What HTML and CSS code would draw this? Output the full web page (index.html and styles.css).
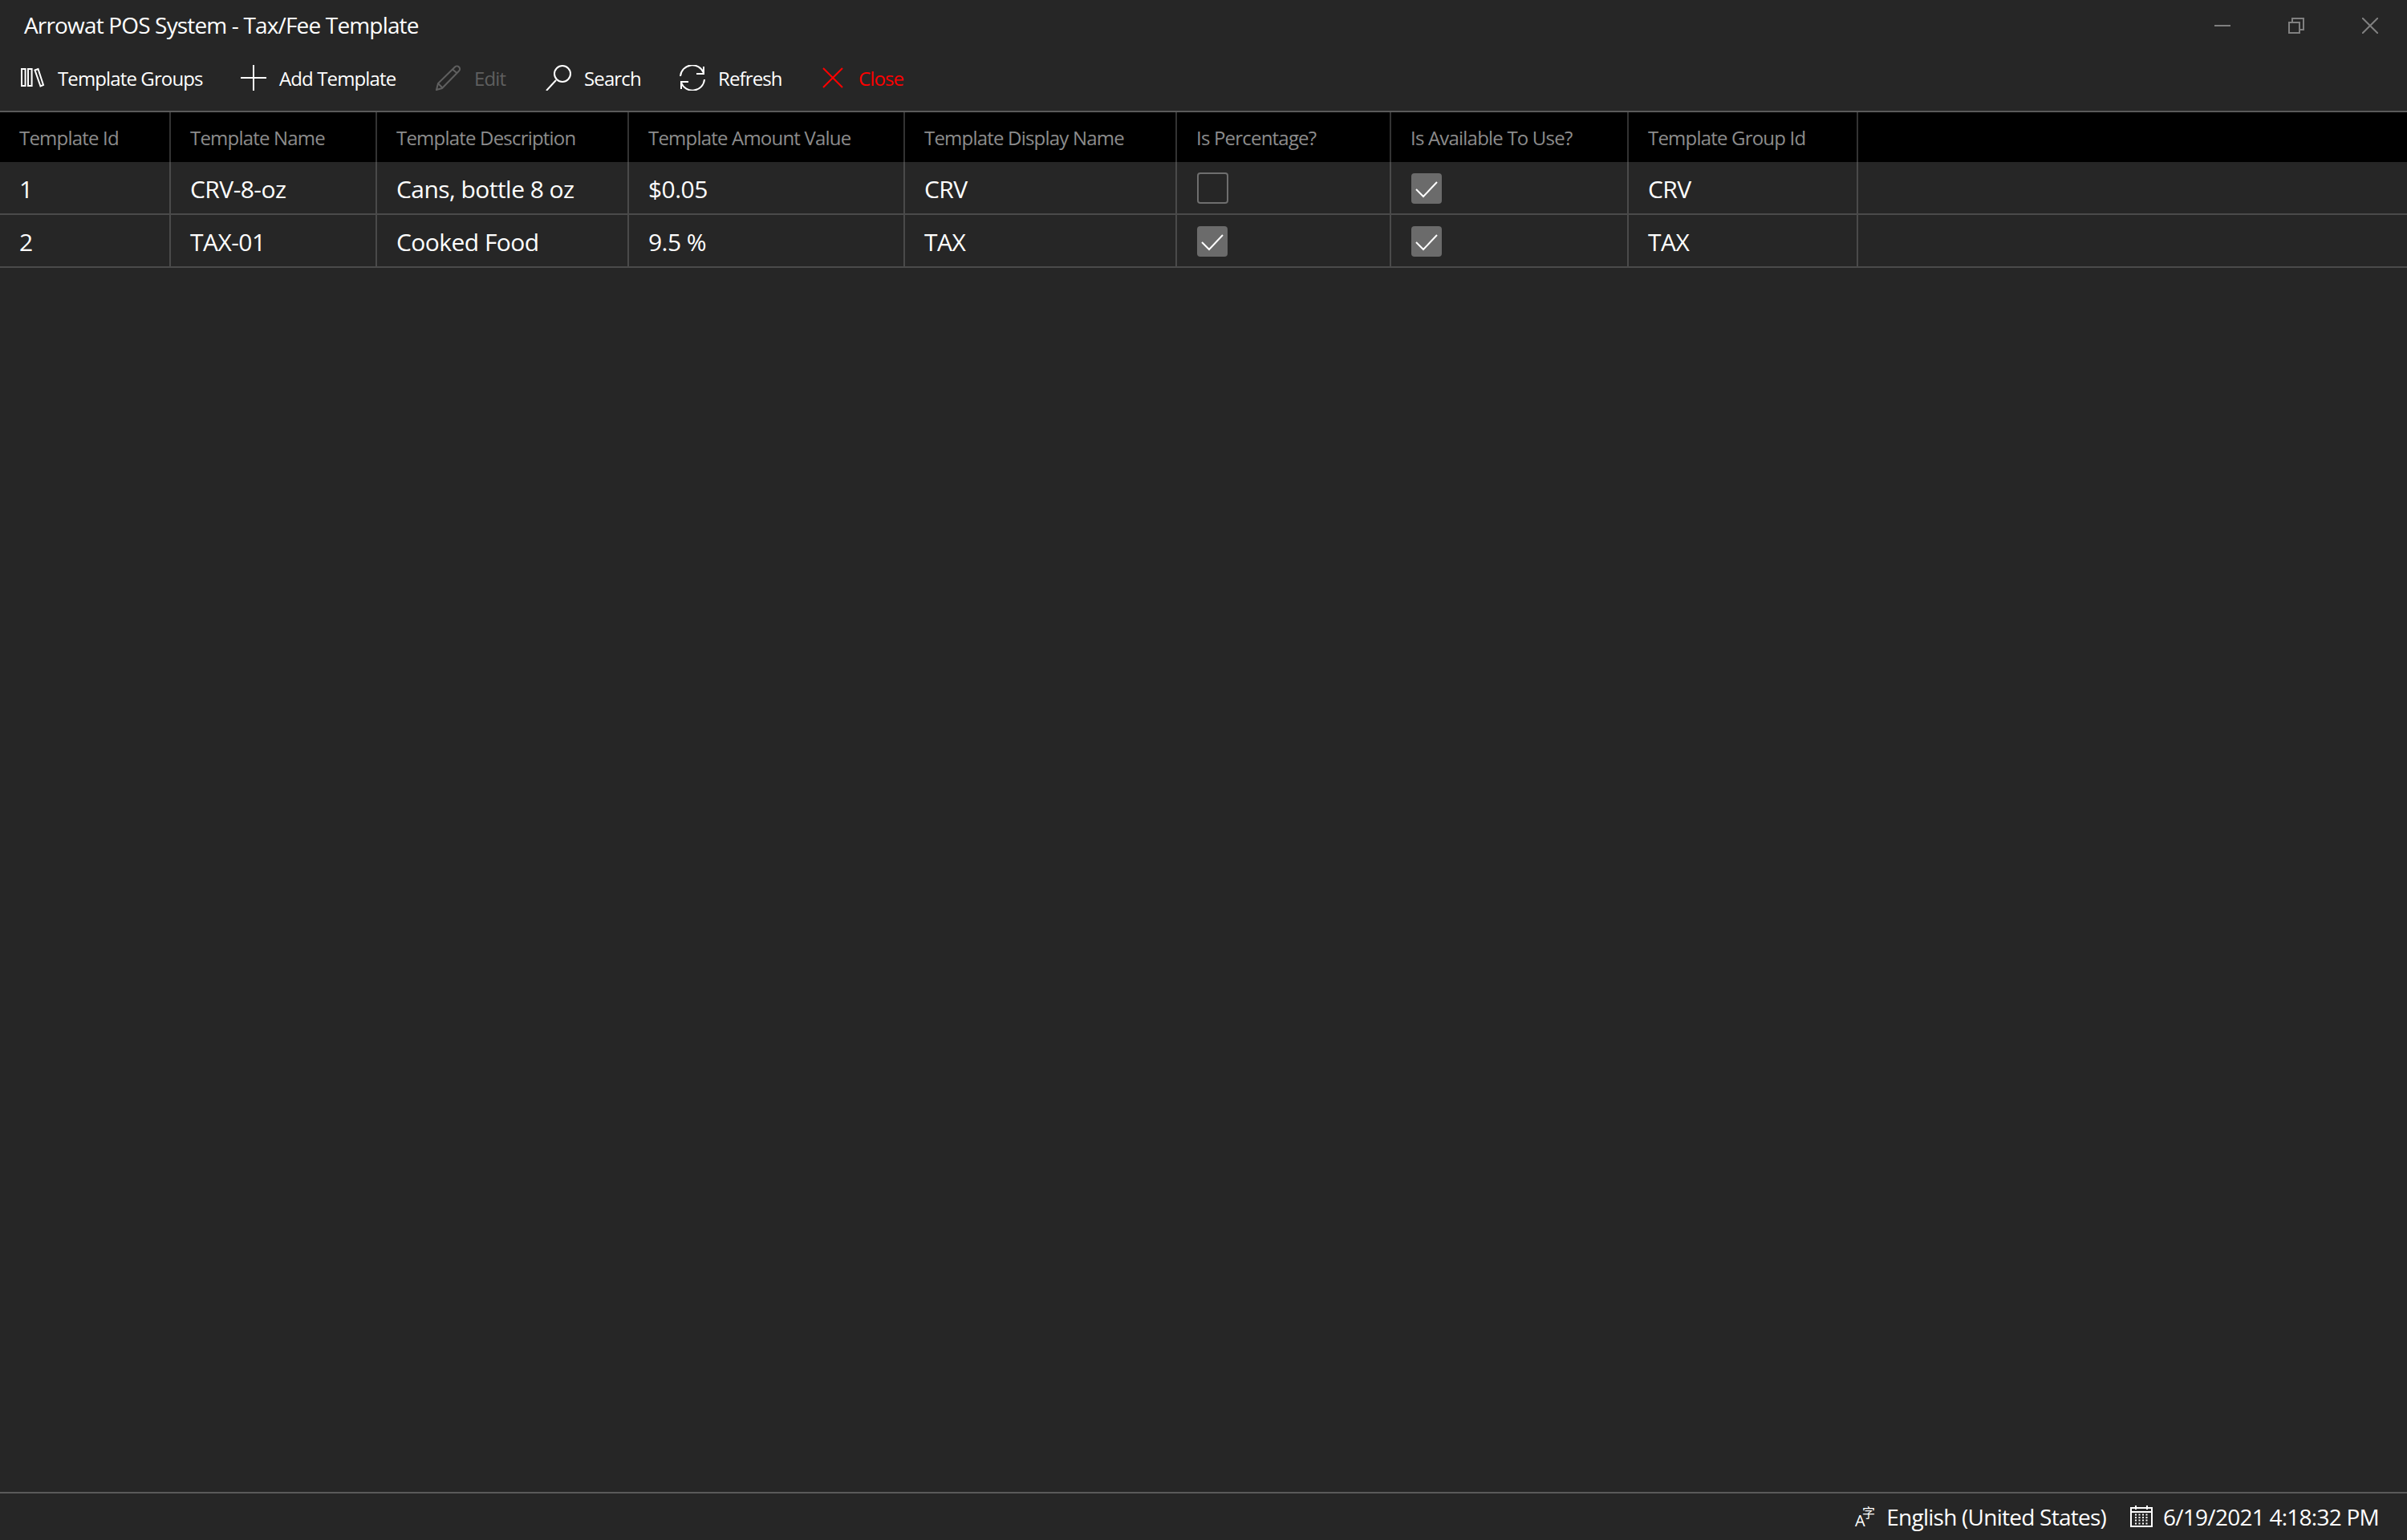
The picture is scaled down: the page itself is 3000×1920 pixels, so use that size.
FILE: index.html
```html
<!DOCTYPE html>
<html lang="en">
<head>
<meta charset="utf-8">
<title>Arrowat POS System - Tax/Fee Template</title>
<link rel="stylesheet" href="styles.css">
</head>
<body>
<div class="app">
  <header class="titlebar">
    <div class="title">Arrowat POS System - Tax/Fee Template</div>
    <div class="winctl">
      <svg class="wi" viewBox="0 0 20 20"><path d="M0 10h20" /></svg>
      <svg class="wi" viewBox="0 0 20 20"><path d="M1 6h13v13H1zM5 6V1h14v14h-5" /></svg>
      <svg class="wi" viewBox="0 0 20 20"><path d="M0 0l20 20M20 0L0 20" /></svg>
    </div>
  </header>
  <nav class="toolbar">
    <div class="tb tb-groups">
      <svg class="ic" viewBox="0 0 32 32"><path d="M3 5h4.600v21H3zM11 5h4.600v21H11zM19.500 6.500L23.500 5 30 25l-3.500 1.500z"/></svg>
      <span>Template Groups</span>
    </div>
    <div class="tb tb-add">
      <svg class="ic" viewBox="0 0 32 32"><path d="M0 16h32M16 0v32"/></svg>
      <span>Add Template</span>
    </div>
    <div class="tb tb-edit disabled">
      <svg class="ic" viewBox="0 0 32 32"><path d="M1 31l2-8L24 2.500c1.500-1.500 3.500-1.500 5 0s1.500 3.500 0 5L8 29zM3 23l6 6M21 5.500l6 5"/></svg>
      <span>Edit</span>
    </div>
    <div class="tb tb-search">
      <svg class="ic" viewBox="0 0 32 32"><circle cx="21" cy="11" r="10"/><path d="M13 19L1 32"/></svg>
      <span>Search</span>
    </div>
    <div class="tb tb-refresh">
      <svg class="ic" viewBox="0 0 32 32"><path d="M1 14A15 15 0 0 1 30 10M30 2v9h-9M31 18A15 15 0 0 1 2 22M2 30v-9h9"/></svg>
      <span>Refresh</span>
    </div>
    <div class="tb tb-close danger">
      <svg class="ic" viewBox="0 0 32 32"><path d="M4 4l24 24M28 4L4 28"/></svg>
      <span>Close</span>
    </div>
  </nav>
  <main class="grid">
    <div class="row head">
      <div class="cell">Template Id</div>
      <div class="cell">Template Name</div>
      <div class="cell">Template Description</div>
      <div class="cell">Template Amount Value</div>
      <div class="cell">Template Display Name</div>
      <div class="cell">Is Percentage?</div>
      <div class="cell">Is Available To Use?</div>
      <div class="cell">Template Group Id</div>
      <div class="fill"></div>
    </div>
    <div class="row body">
      <div class="cell">1</div>
      <div class="cell">CRV-8-oz</div>
      <div class="cell">Cans, bottle 8 oz</div>
      <div class="cell">$0.05</div>
      <div class="cell">CRV</div>
      <div class="cell"><span class="cb"></span></div>
      <div class="cell"><span class="cb on"><svg viewBox="0 0 38 38"><path d="M6 20l9 9 17-18"/></svg></span></div>
      <div class="cell">CRV</div>
      <div class="fill"></div>
    </div>
    <div class="row body">
      <div class="cell">2</div>
      <div class="cell">TAX-01</div>
      <div class="cell">Cooked Food</div>
      <div class="cell">9.5 %</div>
      <div class="cell">TAX</div>
      <div class="cell"><span class="cb on"><svg viewBox="0 0 38 38"><path d="M6 20l9 9 17-18"/></svg></span></div>
      <div class="cell"><span class="cb on"><svg viewBox="0 0 38 38"><path d="M6 20l9 9 17-18"/></svg></span></div>
      <div class="cell">TAX</div>
      <div class="fill"></div>
    </div>
  </main>
  <footer class="status">
    <svg class="si lang" viewBox="0 0 28 28"><text class="lang-a" x="0" y="26">A</text><text class="lang-z" x="9" y="15">字</text></svg>
    <span class="lang-text">English (United States)</span>
    <svg class="si cal" viewBox="0 0 28 28"><path d="M1 3h26v23H1zM1 8h26M7 0v5M21 0v5"/><path class="dots" d="M6 11.500h17M6 15h17M6 18.500h17M6 22.500h17"/></svg>
    <span>6/19/2021 4:18:32 PM</span>
  </footer>
</div>
</body>
</html>
```
FILE: styles.css
```css
* { box-sizing: border-box; }
html, body { margin: 0; padding: 0; }
body {
  width: 3000px;
  height: 1920px;
  background: #262626;
  color: #fff;
  font-family: "Open Sans", "Noto Sans", "Liberation Sans", sans-serif;
  overflow: hidden;
}
.app { display: flex; flex-direction: column; height: 1920px; }

.titlebar { height: 66px; display: flex; align-items: center; justify-content: space-between; padding: 0 36px 5px 30px; }
.title { font-size: 28px; letter-spacing: -0.84px; line-height: 36px; }
.winctl { display: flex; gap: 72px; padding-top: 3px; }
.wi { width: 20px; height: 20px; fill: none; stroke: #808080; stroke-width: 2; display: block; }

.toolbar { height: 72px; display: flex; align-items: center; padding: 0 0 10px 24px; flex: none; font-size: 24px; letter-spacing: -0.88px; }
.tb { display: flex; align-items: center; gap: 16px; flex: none; }
.ic { width: 32px; height: 32px; fill: none; stroke: currentColor; stroke-width: 2; flex: none; display: block; }
.tb-groups { width: 276px; }
.tb-add { width: 243px; }
.tb-edit { width: 137px; }
.tb-search { width: 167px; }
.tb-refresh { width: 175px; }
.tb-close { width: 120px; }
.disabled { color: #5f5f5f; }
.danger { color: #f00; }

.grid { flex: none; border-top: 2px solid #5a5a5a; }
.row { display: grid; grid-template-columns: 213px 257px 314px 344px 339px 267px 296px 286px 1fr; }
.cell { display: flex; align-items: center; padding-left: 24px; border-right: 2px solid #4a4a4a; white-space: nowrap; }
.fill { min-width: 0; }
.head { height: 62px; background: #000; color: #8c8c8c; font-size: 24px; letter-spacing: -0.8px; }
.head .cell { border-right-color: #333; }
.body { height: 66px; font-size: 30px; letter-spacing: -0.55px; border-bottom: 2px solid #4a4a4a; }
.body .cell { padding-top: 3px; }
.cb { width: 39px; height: 39px; margin: -2px 0 0 1px; border-radius: 4px; border: 2px solid #6e6e6e; display: block; }
.cb.on { width: 38px; height: 38px; background: #6b6b6b; border: 0; }
.cb svg { display: block; width: 38px; height: 38px; fill: none; stroke: #fff; stroke-width: 2; }

.status { margin-top: auto; height: 60px; border-top: 2px solid #5a5a5a; display: flex; align-items: center; justify-content: flex-end; padding-right: 35px; font-size: 28px; letter-spacing: -0.75px; flex: none; }
.si { width: 28px; height: 28px; fill: none; stroke: #fff; flex: none; display: block; stroke-width: 2; overflow: visible; }
.si .dots { stroke-width: 2; stroke-dasharray: 2 2.500; }
.si text { fill: #fff; stroke: none; letter-spacing: 0; }
.lang-a { font-size: 20px; font-family: "Open Sans", sans-serif; }
.lang-z { font-size: 16px; font-family: "Noto Sans CJK SC", sans-serif; }
.lang { margin-right: 11px; }
.lang-text { margin-right: 30px; }
.cal { margin-right: 13px; }
```
